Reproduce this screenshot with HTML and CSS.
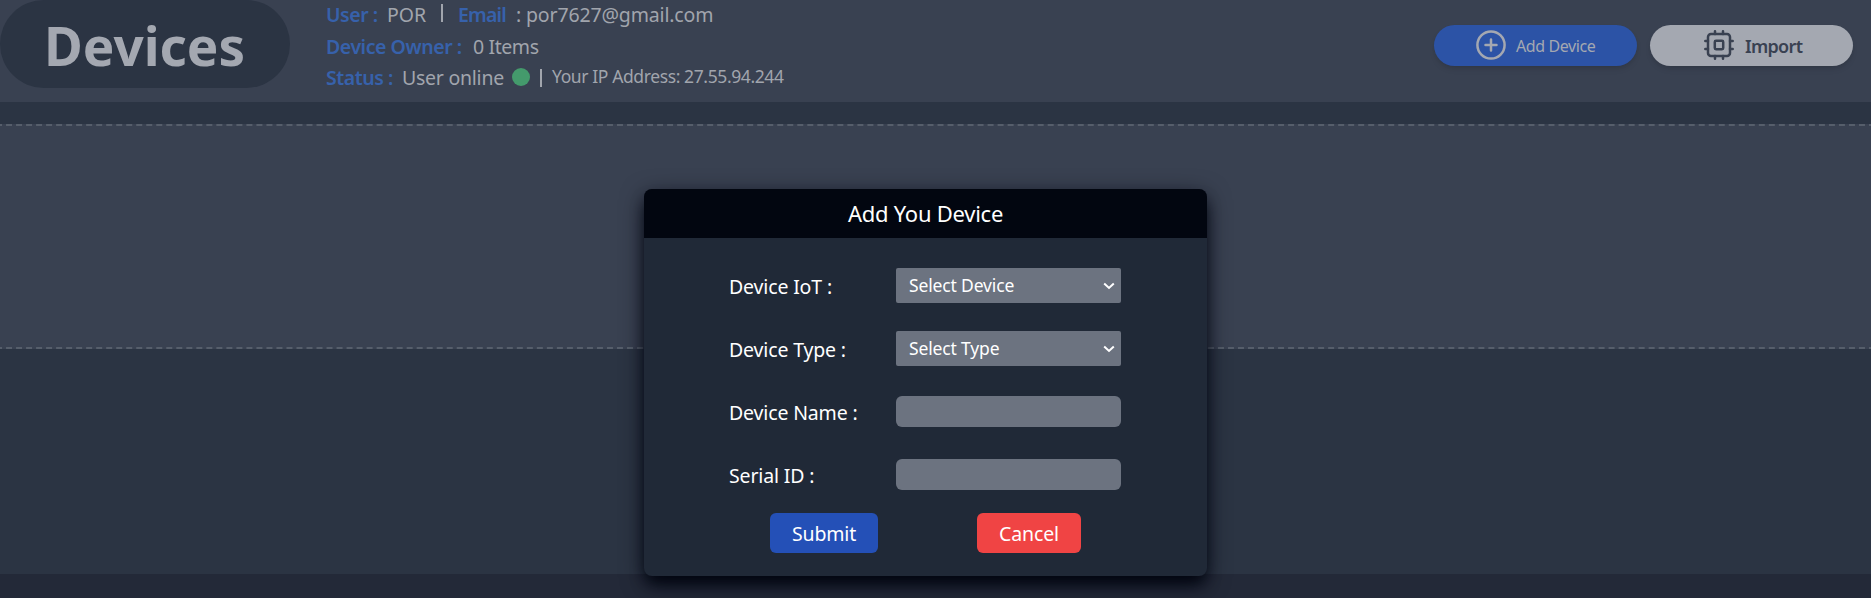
FILE: index.html
```html
<!DOCTYPE html>
<html lang="en">
<head>
<meta charset="utf-8">
<title>Devices</title>
<link rel="stylesheet" href="styles.css">
</head>
<body>
<div class="page">
  <header class="topbar">
    <h1 class="title"><span>Devices</span></h1>
    <div class="info">
      <div class="row"><b class="k-user">User :</b><span class="v-user">POR</span><i class="sep"></i><b class="k-email">Email</b><span class="v-email">: por7627@gmail.com</span></div>
      <div class="row"><b class="k-owner">Device Owner :</b><span class="v-owner">0 Items</span></div>
      <div class="row"><b class="k-status">Status :</b><span class="v-status">User online</span><i class="dot"></i><i class="sep low"></i><span class="ip">Your IP Address: 27.55.94.244</span></div>
    </div>
    <div class="actions">
      <button class="pill add">
        <svg width="30" height="30" viewBox="0 0 30 30" fill="none" stroke="currentColor" stroke-width="2.500" stroke-linecap="round"><circle cx="15" cy="15" r="13.600"/><path d="M15 9.500v11M9.500 15h11"/></svg>
        <span class="t-add">Add Device</span>
      </button>
      <button class="pill import">
        <svg width="30" height="30" viewBox="0 0 30 30" fill="none" stroke="currentColor" stroke-width="2.500" stroke-linecap="round"><rect x="4" y="4" width="22" height="22" rx="3"/><rect x="10.800" y="10.800" width="8.400" height="8.400" rx="1.200"/><path d="M11 1.300V4M19 1.300V4M11 26v2.700M19 26v2.700M1.300 11H4M1.300 19H4M26 11h2.700M26 19h2.700"/></svg>
        <span class="t-import">Import</span>
      </button>
    </div>
  </header>
  <section class="panel"></section>
  <footer class="base"></footer>
</div>
<div class="overlay">
  <form class="modal">
    <h2 class="modal-head"><span>Add You Device</span></h2>
    <div class="field"><label class="l-iot">Device IoT :</label><div class="select"><span class="s-dev">Select Device</span><svg width="12" height="8" viewBox="0 0 12 8" fill="none" stroke="#fff" stroke-width="2"><path d="M1.200 1.500 6 6l4.800-4.500"/></svg></div></div>
    <div class="field"><label class="l-type">Device Type :</label><div class="select"><span class="s-type">Select Type</span><svg width="12" height="8" viewBox="0 0 12 8" fill="none" stroke="#fff" stroke-width="2"><path d="M1.200 1.500 6 6l4.800-4.500"/></svg></div></div>
    <div class="field"><label class="l-name">Device Name :</label><input class="text" type="text"></div>
    <div class="field"><label class="l-serial">Serial ID :</label><input class="text" type="text"></div>
    <div class="buttons"><button type="button" class="btn submit"><span>Submit</span></button><button type="button" class="btn cancel"><span>Cancel</span></button></div>
  </form>
</div>
</body>
</html>
```
FILE: styles.css
```css
* { box-sizing: border-box; }
body { margin: 0; height: 598px; overflow: hidden; background: #2b3443; font-family: "Noto Sans", "Open Sans", sans-serif; }
h1, h2 { margin: 0; font-weight: inherit; }
button { border: 0; padding: 0; font-family: inherit; }
span, b, label { white-space: nowrap; }
.page { height: 598px; display: flex; flex-direction: column; overflow: hidden; }
.topbar { height: 102px; flex: none; display: flex; background: #394151; }
.title { width: 290px; height: 88px; flex: none; border-radius: 44px; background: #2b3443; color: #a4a8b1; font-size: 53px; font-weight: 700; line-height: 92px; padding-left: 44px; }
.info { margin-left: 36px; width: 500px; flex: none; }
.row { height: 31.500px; display: flex; color: #a1a5ad; font-size: 19.500px; line-height: 30px; }
.row b { color: #3761ab; font-weight: 600; flex: none; letter-spacing: -0.450px; }
.row span { flex: none; }
.k-user { width: 61px; }
.v-user { width: 54px; }
.sep { width: 2px; height: 18px; margin-top: 4px; background: #a1a5ad; flex: none; }
.sep.low { margin: 6px 10px 0 10px; }
.row .k-email { width: 58px; margin-left: 15px; letter-spacing: -0.800px; }
.v-email { letter-spacing: -0.150px; }
.v-owner { letter-spacing: -0.400px; }
.k-owner { width: 147px; }
.k-status { width: 76px; }
.v-status { width: 110px; letter-spacing: -0.250px; }
.dot { width: 18px; height: 18px; margin-top: 5px; border-radius: 50%; background: #449a6c; flex: none; }
.row .ip { font-size: 17.500px; line-height: 27px; letter-spacing: -0.390px; }
.actions { margin-left: auto; padding: 25px 18px 0 0; display: flex; gap: 13px; }
.pill { width: 203px; height: 41px; border-radius: 21px; display: flex; align-items: center; box-shadow: 0 4px 6px -1px rgba(0,0,0,.1), 0 2px 4px -2px rgba(0,0,0,.1); }
.pill svg { flex: none; margin-top: -1px; }
.pill span { line-height: 20px; }
.add { background: #2c53a6; color: #a4a8b1; padding-left: 42px; font-size: 16px; letter-spacing: -0.400px; }
.add .t-add { margin-left: 10px; }
.import { background: #a4a8b1; color: #394151; padding-left: 54px; font-size: 18px; font-weight: 600; letter-spacing: -0.700px; }
.import .t-import { margin-left: 11px; }
.panel { height: 225px; flex: none; margin: 22px -4px 0; background: #394151; border: 2px dashed #565e6b; }
.base { height: 24px; flex: none; margin-top: auto; background: #232938; }
.overlay { position: absolute; left: 644px; top: 189px; }
.modal { width: 563px; height: 387px; border-radius: 8px; background: #202937; color: #fff; box-shadow: 0 10px 15px -3px #020510, 0 6px 24px -2px rgba(2,5,16,.75); overflow: hidden; }
.modal-head { height: 49px; background: #020610; font-size: 22px; line-height: 49px; text-align: center; margin-bottom: 19px; letter-spacing: -0.250px; }
.field { height: 63px; display: flex; padding: 11px 0 0 85px; font-size: 19.500px; }
.field label { width: 167px; line-height: 38px; flex: none; letter-spacing: -0.150px; }
.select { width: 225px; height: 35px; border-radius: 2px; background: #6c7380; display: flex; justify-content: space-between; align-items: center; padding: 0 6px 0 13px; font-size: 17.500px; line-height: 33px; letter-spacing: -0.150px; }
.select span { margin-top: -1px; }
.text { width: 225px; height: 31px; margin-top: 2px; border: 0; border-radius: 6px; background: #6c7380; }
.buttons { display: flex; gap: 99px; padding: 4px 0 0 126px; }
.btn { height: 40px; border-radius: 6px; color: #fff; font-size: 19.500px; line-height: 42px; letter-spacing: -0.150px; }
.submit { width: 108px; background: #2450b7; }
.cancel { width: 104px; background: #f04444; }
```
